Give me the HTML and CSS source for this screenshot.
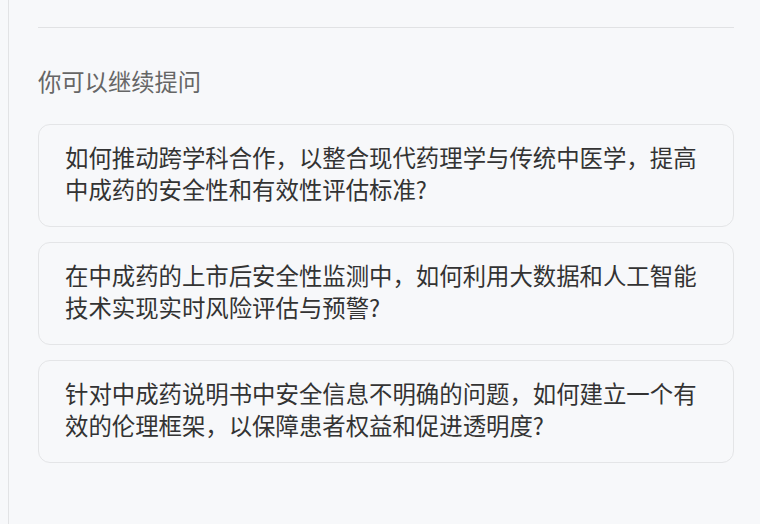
FILE: index.html
```html
<!DOCTYPE html>
<html lang="zh-CN">
<head>
<meta charset="utf-8">
<link rel="stylesheet" href="styles.css">
</head>
<body>
<div class="panel">
  <div class="divider"></div>
  <h2 class="title">你可以继续提问</h2>
  <div class="list">
    <div class="card">如何推动跨学科合作，以整合现代药理学与传统中医学，提高中成药的安全性和有效性评估标准?</div>
    <div class="card">在中成药的上市后安全性监测中，如何利用大数据和人工智能技术实现实时风险评估与预警?</div>
    <div class="card">针对中成药说明书中安全信息不明确的问题，如何建立一个有效的伦理框架，以保障患者权益和促进透明度?</div>
  </div>
</div>
</body>
</html>
```
FILE: styles.css
```css
html, body {
  margin: 0;
  padding: 0;
  background: #f7f8fa;
  font-family: "Noto Sans CJK SC", "Noto Sans", sans-serif;
}
body {
  padding-left: 8px;
  height: 524px;
  box-sizing: border-box;
  overflow: hidden;
}
.panel {
  border-left: 1px solid #e2e3e5;
  height: 100%;
  box-sizing: border-box;
  padding: 27px 26px 0 29px;
}
.divider {
  border-top: 1px solid #e1e2e4;
}
.title {
  margin: 38px 0 28px;
  font-size: 23.3px;
  line-height: 30px;
  font-weight: 400;
  color: #666666;
}
.list {
  display: flex;
  flex-direction: column;
  gap: 15px;
}
.card {
  border: 1px solid #e4e5e7;
  border-radius: 12px;
  padding: 16px 26px 21px;
  font-size: 23.4px;
  line-height: 32px;
  color: #333333;
}
```
